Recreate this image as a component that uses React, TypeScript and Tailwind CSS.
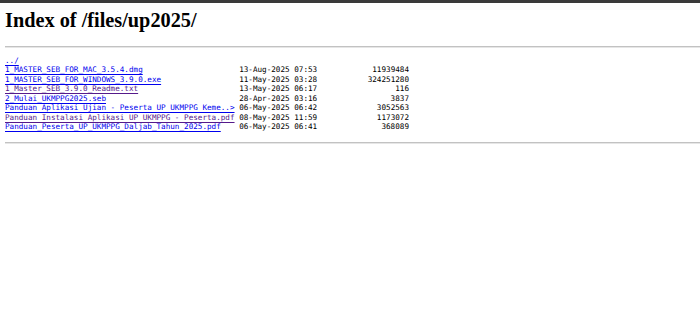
const entries = [
  { name: "1_MASTER_SEB_FOR_MAC_3.5.4.dmg", date: "13-Aug-2025 07:53", size: "11939484", visited: false },
  { name: "1_MASTER_SEB_FOR_WINDOWS_3.9.0.exe", date: "11-May-2025 03:28", size: "324251280", visited: false },
  { name: "1_Master_SEB_3.9.0_Readme.txt", date: "13-May-2025 06:17", size: "116", visited: true },
  { name: "2_Mulai_UKMPPG2025.seb", date: "28-Apr-2025 03:16", size: "3837", visited: false },
  { name: "Panduan Aplikasi Ujian - Peserta UP UKMPPG Kemendikdasmen.pdf", date: "06-May-2025 06:42", size: "3052563", visited: false },
  { name: "Panduan Instalasi Aplikasi UP UKMPPG - Peserta.pdf", date: "08-May-2025 11:59", size: "1173072", visited: true },
  { name: "Panduan_Peserta_UP_UKMPPG_Daljab_Tahun_2025.pdf", date: "06-May-2025 06:41", size: "368089", visited: false },
];

// nginx autoindex style: names cut at 50 columns
const shortName = (name: string) => (name.length > 50 ? name.slice(0, 47) + "..>" : name);

export default function App() {
  return (
    <div className="min-h-[336px] bg-white text-black">
      <div className="h-[3px] bg-[#3a3a3a]" />
      <div className="pl-[5px]">
        <h1 className="mt-[6.3px] text-[20.3px] leading-[23.3px] font-bold font-['Liberation_Serif',serif]">
          Index of /files/up2025/
        </h1>
        <div className="mt-[13.5px] h-[2px] border-t border-b border-t-[#c2c2c2] border-b-[#e6e6e6]" />
        <pre className="mt-[7.5px] text-[7.64px] leading-[9.55px] font-['DejaVu_Sans_Mono',monospace] whitespace-pre">
          <a href="#" className="text-[#0000ee] underline underline-offset-[2px]">../</a>
          {"\n"}
          {entries.map((e) => {
            const label = shortName(e.name);
            return (
              <span key={e.name}>
                <a
                  href="#"
                  className={`underline underline-offset-[2px] ${e.visited ? "text-[#551a8b]" : "text-[#0000ee]"}`}
                >
                  {label}
                </a>
                {" ".repeat(50 - label.length) + " " + e.date + " " + e.size.padStart(19) + "\n"}
              </span>
            );
          })}
        </pre>
        <div className="mt-[10.5px] h-[2px] border-t border-b border-t-[#c2c2c2] border-b-[#e6e6e6]" />
      </div>
    </div>
  );
}
